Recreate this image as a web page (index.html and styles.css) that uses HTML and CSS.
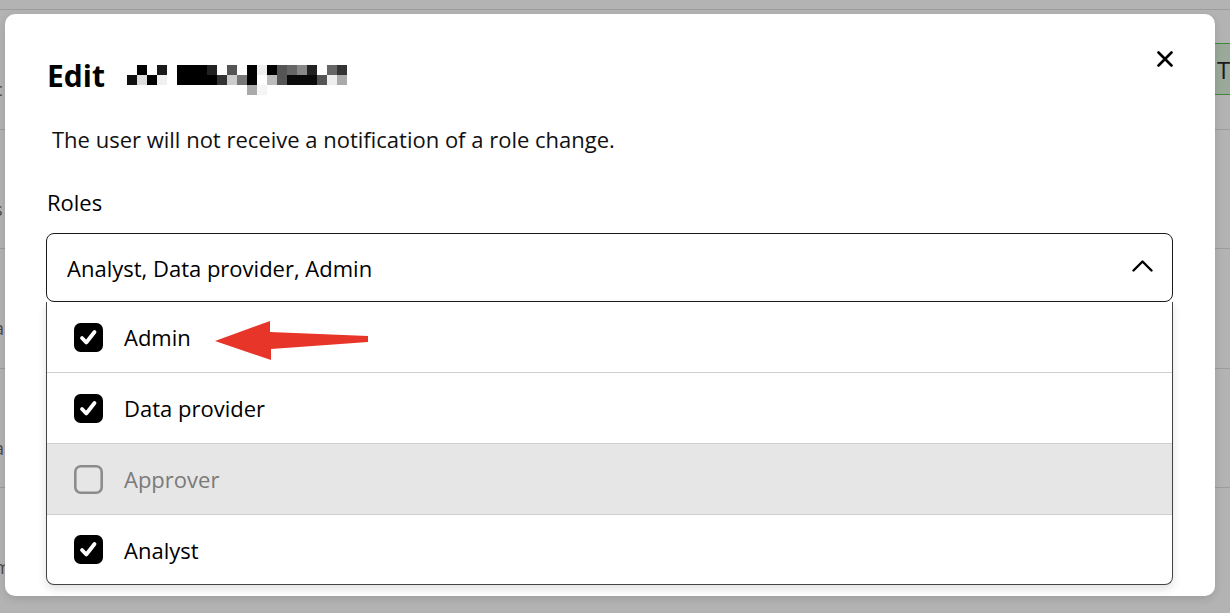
FILE: index.html
```html
<!DOCTYPE html>
<html lang="en">
<head>
<meta charset="utf-8">
<title>Edit user</title>
<link rel="stylesheet" href="styles.css">
</head>
<body>
<div class="page">
  <div class="bg-row first"><span class="bg-cell">c</span><span class="bg-btn">T</span></div>
  <div class="bg-row"><span class="bg-cell">s</span></div>
  <div class="bg-row"><span class="bg-cell">a</span></div>
  <div class="bg-row"><span class="bg-cell">a</span></div>
  <div class="bg-row"><span class="bg-cell">m</span></div>
</div>

<div class="modal" role="dialog">
  <div class="modal-head">
    <h2 class="modal-title">Edit
      <svg class="redacted" width="220" height="30" viewBox="0 0 220 30" aria-hidden="true">
        <rect x="10" y="0" width="10" height="10" fill="#000"/>
        <rect x="30" y="0" width="10" height="10" fill="#1a1a1a"/>
        <rect x="50" y="0" width="30" height="10" fill="#000"/>
        <rect x="80" y="0" width="10" height="10" fill="#222"/>
        <rect x="100" y="0" width="10" height="10" fill="#555"/>
        <rect x="120" y="0" width="10" height="10" fill="#000"/>
        <rect x="130" y="0" width="10" height="10" fill="#eee"/>
        <rect x="140" y="0" width="10" height="10" fill="#000"/>
        <rect x="150" y="0" width="10" height="10" fill="#555"/>
        <rect x="160" y="0" width="10" height="10" fill="#666"/>
        <rect x="170" y="0" width="10" height="10" fill="#888"/>
        <rect x="180" y="0" width="10" height="10" fill="#222"/>
        <rect x="200" y="0" width="10" height="10" fill="#666"/>
        <rect x="210" y="0" width="10" height="10" fill="#333"/>
        <rect x="0" y="10" width="10" height="10" fill="#111"/>
        <rect x="10" y="10" width="10" height="10" fill="#ddd"/>
        <rect x="20" y="10" width="10" height="10" fill="#000"/>
        <rect x="30" y="10" width="10" height="10" fill="#f0f0f0"/>
        <rect x="50" y="10" width="40" height="10" fill="#000"/>
        <rect x="90" y="10" width="10" height="10" fill="#333"/>
        <rect x="100" y="10" width="10" height="10" fill="#ccc"/>
        <rect x="110" y="10" width="10" height="10" fill="#777"/>
        <rect x="120" y="10" width="10" height="10" fill="#000"/>
        <rect x="140" y="10" width="10" height="10" fill="#bbb"/>
        <rect x="150" y="10" width="10" height="10" fill="#555"/>
        <rect x="160" y="10" width="30" height="10" fill="#0a0a0a"/>
        <rect x="190" y="10" width="10" height="10" fill="#555"/>
        <rect x="200" y="10" width="10" height="10" fill="#eee"/>
        <rect x="210" y="10" width="10" height="10" fill="#aaa"/>
        <rect x="120" y="20" width="10" height="10" fill="#aaa"/>
        <rect x="130" y="20" width="10" height="10" fill="#f5f5f5"/>
      </svg>
    </h2>
    <button class="close" aria-label="Close">
      <svg width="16" height="16" viewBox="0 0 16 16"><path d="M1.5 1.5 L14.5 14.5 M14.5 1.5 L1.5 14.5" stroke="#000" stroke-width="2.6" stroke-linecap="round"/></svg>
    </button>
  </div>

  <p class="desc">The user will not receive a notification of a role change.</p>

  <div class="field-label">Roles</div>

  <div class="select">
    <span class="select-value">Analyst, Data provider, Admin</span>
    <svg class="chevron" width="21" height="12" viewBox="0 0 21 12"><path d="M1.5 10.5 L10.5 1.5 L19.5 10.5" fill="none" stroke="#000" stroke-width="2.4" stroke-linecap="round" stroke-linejoin="round"/></svg>
  </div>

  <ul class="menu">
    <li class="option">
      <svg class="cb" width="29" height="29" viewBox="0 0 29 29"><rect x="0" y="0" width="29" height="29" rx="6.5" fill="#000"/><path d="M8 15 L12.3 19.5 L20.5 9" fill="none" stroke="#fff" stroke-width="3.8" stroke-linecap="round" stroke-linejoin="round"/></svg>
      <span>Admin</span>
    </li>
    <li class="option">
      <svg class="cb" width="29" height="29" viewBox="0 0 29 29"><rect x="0" y="0" width="29" height="29" rx="6.5" fill="#000"/><path d="M8 15 L12.3 19.5 L20.5 9" fill="none" stroke="#fff" stroke-width="3.8" stroke-linecap="round" stroke-linejoin="round"/></svg>
      <span>Data provider</span>
    </li>
    <li class="option disabled">
      <svg class="cb" width="29" height="29" viewBox="0 0 29 29"><rect x="1.3" y="1.3" width="26.4" height="26.4" rx="5.5" fill="none" stroke="#8c8c8c" stroke-width="2.6"/></svg>
      <span>Approver</span>
    </li>
    <li class="option">
      <svg class="cb" width="29" height="29" viewBox="0 0 29 29"><rect x="0" y="0" width="29" height="29" rx="6.5" fill="#000"/><path d="M8 15 L12.3 19.5 L20.5 9" fill="none" stroke="#fff" stroke-width="3.8" stroke-linecap="round" stroke-linejoin="round"/></svg>
      <span>Analyst</span>
    </li>
  </ul>
</div>

<svg class="annot-arrow" width="162" height="48" viewBox="0 0 162 48" aria-hidden="true">
  <polygon points="5,25 60,5 60,16 158,20 158,26 61,33 61,44" fill="#e8352a"/>
</svg>
</body>
</html>
```

FILE: styles.css
```css
* { box-sizing: border-box; }

html, body {
  margin: 0;
  padding: 0;
  width: 1230px;
  height: 613px;
  overflow: hidden;
}

body {
  background: #b3b3b3;
  font-family: "Open Sans", "Noto Sans", "Liberation Sans", sans-serif;
  color: #000;
  position: relative;
}

/* dimmed page behind the dialog */
.page {
  display: flex;
  flex-direction: column;
  padding-top: 9px;
}

.bg-row {
  height: 119.5px;
  padding-top: 40px;
  border-top: 1px solid #9c9c9c;
  display: flex;
  align-items: center;
  justify-content: space-between;
  font-size: 18px;
  color: #4a4a4a;
}

.bg-cell {
  margin-left: -6px;
}

.bg-btn {
  width: 40px;
  height: 52px;
  background: #9aa99a;
  border: 1px solid #3f8a3f;
  border-right: none;
  margin-right: -10px;
  display: flex;
  align-items: center;
  padding-left: 16px;
  font-size: 24px;
  color: #1a1a1a;
  align-self: flex-start;
  margin-top: -7px;
}

/* dialog */
.modal {
  position: absolute;
  left: 5px;
  top: 14px;
  width: 1210px;
  height: 582px;
  background: #fff;
  border-radius: 10px;
  box-shadow: 0 3px 8px rgba(0, 0, 0, 0.12);
  padding: 37px 42px 0 41px;
  display: flex;
  flex-direction: column;
}

.modal-head {
  display: flex;
  justify-content: space-between;
  align-items: flex-start;
}

.modal-title {
  margin: 6px 0 0 1px;
  font-size: 30px;
  line-height: 36px;
  font-weight: 700;
  display: flex;
  align-items: center;
  gap: 22px;
}

.redacted {
  display: block;
  margin-top: 8px;
}

.close {
  border: 0;
  background: transparent;
  padding: 0;
  margin: 0;
  width: 16px;
  height: 16px;
  display: block;
  cursor: pointer;
}

.close svg { display: block; }

.desc {
  margin: 30px 0 0 6px;
  font-size: 22px;
  line-height: 28px;
  color: #111;
}

.field-label {
  margin: 35px 0 0 1px;
  font-size: 22px;
  line-height: 28px;
}

.select {
  margin-top: 17px;
  height: 69px;
  border: 1px solid #1a1a1a;
  border-radius: 8px;
  display: flex;
  align-items: center;
  justify-content: space-between;
  padding: 0 19px 0 20px;
  font-size: 22px;
}

.select-value { line-height: 28px; }

.chevron { display: block; margin-top: -4px; }

.menu {
  list-style: none;
  margin: 0;
  padding: 0;
  border: 1px solid #444;
  border-top: 0;
  border-radius: 0 0 8px 8px;
  box-shadow: 0 4px 10px rgba(0, 0, 0, 0.12);
  overflow: hidden;
}

.option {
  height: 71px;
  display: flex;
  align-items: center;
  gap: 21px;
  padding-left: 27px;
  font-size: 22px;
  border-bottom: 1px solid #cfcfcf;
}

.option:last-child {
  border-bottom: 0;
  height: 69px;
}

.option .cb { display: block; flex: none; }

.option.disabled {
  background: #e6e6e6;
  color: #7a7a7a;
}

.annot-arrow {
  position: absolute;
  left: 210px;
  top: 316px;
}
```
